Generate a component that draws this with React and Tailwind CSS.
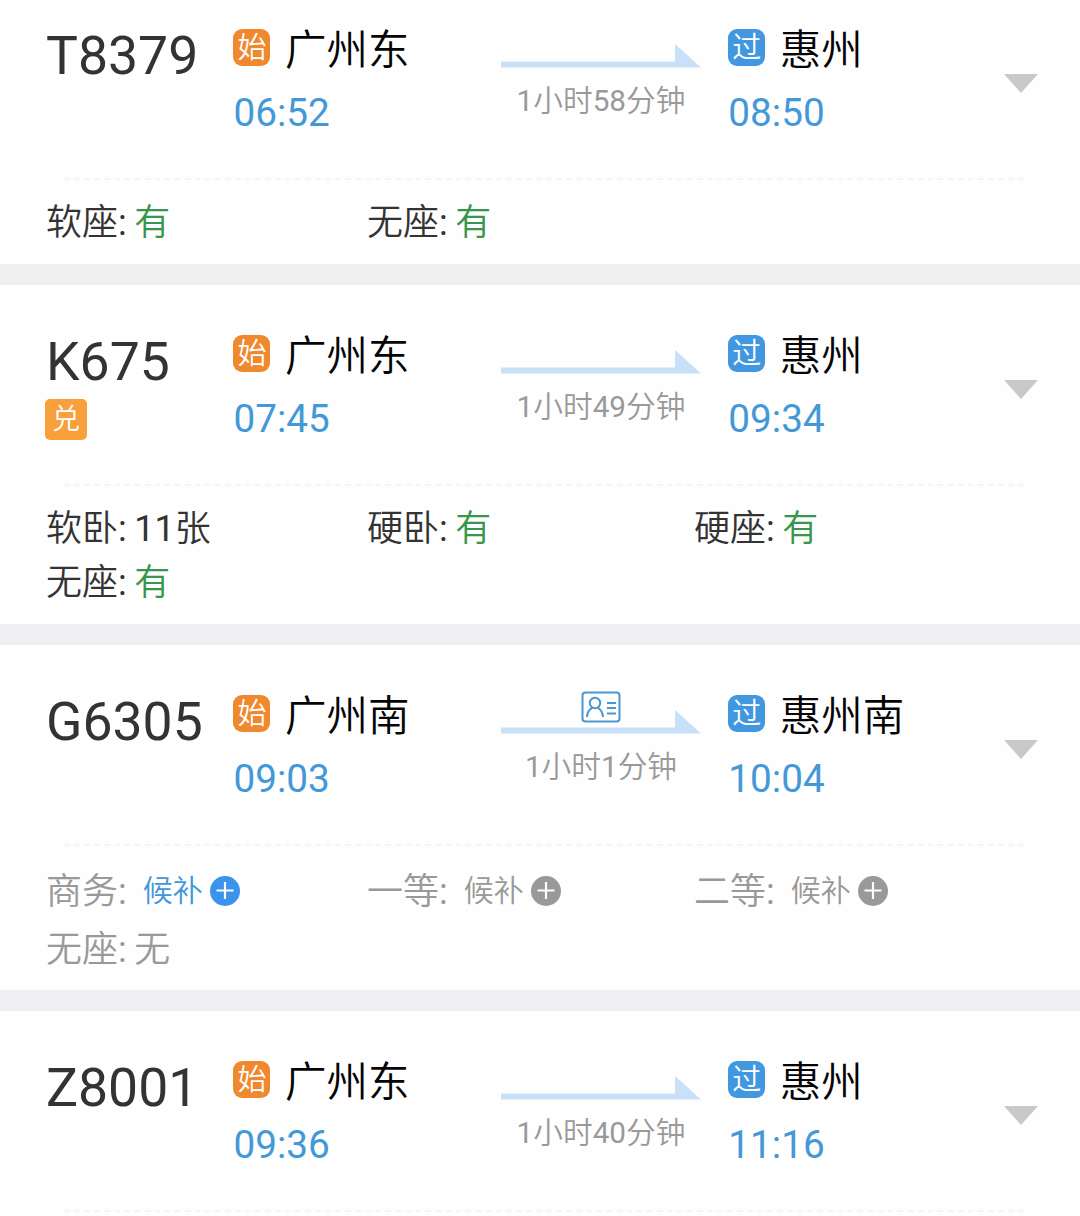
import clsx from "clsx";

const trains = [
  {
    no: "T8379",
    from: "广州东",
    depart: "06:52",
    to: "惠州",
    arrive: "08:50",
    duration: "1小时58分钟",
    seats: [
      { name: "软座", value: "有" },
      { name: "无座", value: "有" },
    ],
    bodyClass: "h-[86px]",
  },
  {
    no: "K675",
    exchange: true,
    from: "广州东",
    depart: "07:45",
    to: "惠州",
    arrive: "09:34",
    duration: "1小时49分钟",
    seats: [
      { name: "软卧", value: "11张" },
      { name: "硬卧", value: "有" },
      { name: "硬座", value: "有" },
      { name: "无座", value: "有" },
    ],
    bodyClass: "h-[140px]",
  },
  {
    no: "G6305",
    idCard: true,
    soldOut: true,
    from: "广州南",
    depart: "09:03",
    to: "惠州南",
    arrive: "10:04",
    duration: "1小时1分钟",
    seats: [
      { name: "商务", waitlist: "active" },
      { name: "一等", waitlist: "disabled" },
      { name: "二等", waitlist: "disabled" },
      { name: "无座", value: "无" },
    ],
    bodyClass: "h-[146px]",
  },
  {
    no: "Z8001",
    from: "广州东",
    depart: "09:36",
    to: "惠州",
    arrive: "11:16",
    duration: "1小时40分钟",
    seats: [],
    bodyClass: "h-[86px]",
  },
];

// digits are set in regular weight, the Chinese text around them stays lighter
function MixedText({ text }) {
  return text.split(/(\d+)/).map((part, i) =>
    /^\d+$/.test(part) ? (
      <span key={i} className="font-normal">{part}</span>
    ) : (
      part
    )
  );
}

function IdCardIcon() {
  return (
    <svg width="40" height="32" viewBox="0 0 40 32" fill="none" stroke="#4a97d2" strokeWidth="2" className="absolute left-[80px] top-[46px]">
      <rect x="1.5" y="1.5" width="37" height="29" rx="3" />
      <circle cx="14" cy="12" r="5.2" />
      <path d="M6 26c.3-5 2.2-7.6 5.5-9.300M22 26c-.3-5-2.2-7.6-5.5-9.300" />
      <path d="M26 12h9M26 17h9M26 22.5h9" strokeWidth="1.8" />
    </svg>
  );
}

function PlusIcon({ active }) {
  return (
    <svg width="30" height="30" viewBox="0 0 30 30" className="ml-[7px] shrink-0">
      <circle cx="15" cy="15" r="15" fill={active ? "#3b93ec" : "#999999"} />
      <path d="M6.5 14.5h17M15 6v17" stroke="#fff" strokeWidth="2.2" />
    </svg>
  );
}

function Station({ tag, tagClass, name, time, className }) {
  return (
    <div className={clsx("shrink-0 pt-[47px]", className)}>
      <div className="flex h-[50px] items-center">
        <span className={clsx("-mt-[7px] flex h-[37px] w-[37px] items-center justify-center rounded-[9px] text-[29px] leading-none text-white", tagClass)}>
          <span className="mt-px">{tag}</span>
        </span>
        <span className="ml-[14.5px] whitespace-nowrap text-[41.5px] leading-[50px] text-[#050505]">{name}</span>
      </div>
      <p className="mt-[13px] text-[38.7px] leading-[48px] font-normal text-[#4398d8]">{time}</p>
    </div>
  );
}

function Seat({ seat }) {
  return (
    <div className="flex items-center whitespace-nowrap">
      <span>
        {seat.name}
        <span className="font-normal">:</span>
      </span>
      {seat.waitlist ? (
        <span className={clsx("-mt-[3px] ml-[16px] flex items-center text-[30px]", seat.waitlist === "active" ? "text-[#3f97dc]" : "text-[#999]")}>
          候补
          <PlusIcon active={seat.waitlist === "active"} />
        </span>
      ) : (
        <span className={clsx("ml-[7.5px]", seat.value === "有" && "text-[#37964b]")}>
          <MixedText text={seat.value} />
        </span>
      )}
    </div>
  );
}

function TrainCard({ train }) {
  return (
    <div className="shrink-0 bg-[#fefefe]">
      <div className="relative flex h-[199px] pl-[46px]">
        <div className="w-[187.4px] shrink-0 pt-[46px]">
          <h2 className="text-[53.5px] leading-[62px] font-normal text-[#333]">{train.no}</h2>
          {train.exchange && (
            <span className="-ml-px mt-[6px] flex h-[41px] w-[42px] items-center justify-center rounded-[5px] bg-[#f8a03c] text-[28px] leading-none text-white">
              <span className="mt-px">兑</span>
            </span>
          )}
        </div>

        <Station tag="始" tagClass="bg-[#f0882e]" name={train.from} time={train.depart} className="w-[267.6px]" />

        <div className="relative w-[200px] shrink-0 pt-[64px]">
          {train.idCard && <IdCardIcon />}
          <svg width="200" height="25" viewBox="0 0 200 25" className="block">
            <path d="M0 18.5h174V1l26 23.5H0z" fill="#c8e1f8" />
          </svg>
          <p className="mt-[14px] whitespace-nowrap text-center text-[29.7px] leading-[38px] text-[#999]">
            <MixedText text={train.duration} />
          </p>
        </div>

        <Station tag="过" tagClass="bg-[#4298e0]" name={train.to} time={train.arrive} className="ml-[27.3px] w-[275.7px]" />

        <svg width="34" height="19" viewBox="0 0 34 19" className="mt-[95px] shrink-0">
          <path d="M0 0h34L17 19z" fill="#c9c9c9" />
        </svg>
      </div>

      <div className={clsx("px-[46px]", train.bodyClass)}>
        <div className="ml-[18px] mr-[10px] border-t-2 border-dashed border-[#f6f4f6]" />
        <div
          className={clsx(
            "grid grid-cols-[321px_327px_1fr] text-[36px]",
            train.soldOut ? "auto-rows-[58px] pt-[17px] text-[#999]" : "auto-rows-[54px] pt-[16px] text-[#333]"
          )}
        >
          {train.seats.map((seat) => (
            <Seat key={seat.name} seat={seat} />
          ))}
        </div>
      </div>
    </div>
  );
}

export default function App() {
  return (
    <div className="h-[1216px] w-[1080px] overflow-hidden bg-[#f0eff1] font-['Roboto','Noto_Sans_CJK_SC',sans-serif] font-[350]">
      <div className="-mt-[21px] flex flex-col gap-[21px]">
        {trains.map((train) => (
          <TrainCard key={train.no} train={train} />
        ))}
      </div>
    </div>
  );
}
